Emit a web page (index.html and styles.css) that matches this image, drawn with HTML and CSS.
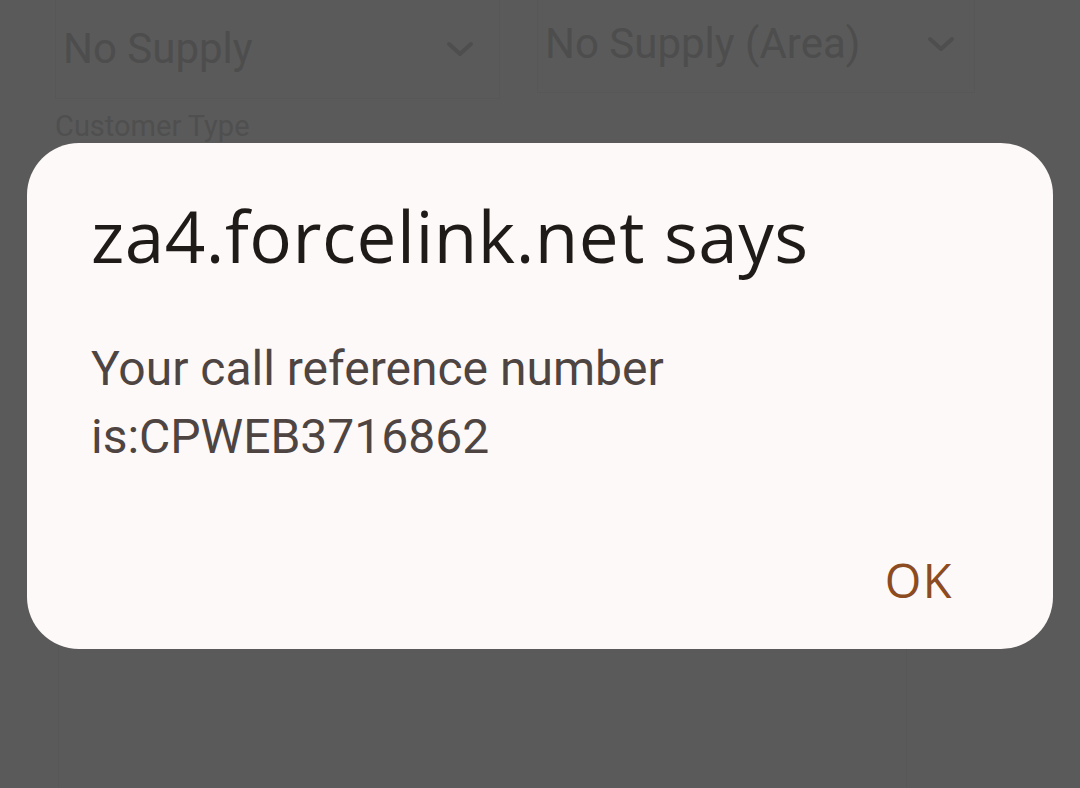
FILE: index.html
```html
<!DOCTYPE html>
<html>
<head>
<meta charset="utf-8">
<link rel="stylesheet" href="styles.css">
</head>
<body>
<div class="page">
  <div class="row">
    <div class="field field-a">
      <span class="field-text">No Supply</span>
      <svg class="chev" width="30" height="18" viewBox="0 0 30 18"><path d="M4 4 L15 14 L26 4" fill="none" stroke="#4e4e4e" stroke-width="4" stroke-linecap="round" stroke-linejoin="round"/></svg>
    </div>
    <div class="field field-b">
      <span class="field-text">No Supply (Area)</span>
      <svg class="chev" width="30" height="18" viewBox="0 0 30 18"><path d="M4 4 L15 14 L26 4" fill="none" stroke="#4e4e4e" stroke-width="4" stroke-linecap="round" stroke-linejoin="round"/></svg>
    </div>
  </div>
  <div class="label">Customer Type</div>
  <div class="textarea"></div>
</div>

<div class="dialog">
  <h1 class="title">za4.forcelink.net says</h1>
  <p class="msg">Your call reference number<br>is:CPWEB3716862</p>
  <div class="actions"><span class="ok">OK</span></div>
</div>
</body>
</html>
```

FILE: styles.css
```css
html, body {
  margin: 0;
  padding: 0;
  width: 1080px;
  height: 788px;
  overflow: hidden;
  background: #5a5a5a;
  font-family: Roboto, "Liberation Sans", sans-serif;
}
.page {
  width: 1080px;
  height: 788px;
  overflow: hidden;
}
.row {
  display: flex;
  gap: 37px;
  padding-left: 55px;
}
.field {
  box-sizing: border-box;
  display: flex;
  align-items: center;
  justify-content: space-between;
  border: 1px solid #575757;
  border-top: none;
}
.field-a {
  width: 445px;
  height: 99px;
  padding: 0 24px 0 7px;
}
.field-b {
  width: 438px;
  height: 93px;
  padding: 0 18px 4px 7px;
}
.field-text {
  font-size: 42px;
  line-height: 50px;
  color: #4d4d4d;
}
.chev {
  display: block;
}
.label {
  margin: 10px 0 0 55px;
  font-size: 29px;
  color: #4f4f4f;
  line-height: 34px;
}
.textarea {
  margin: 30px 0 0 58px;
  width: 849px;
  height: 700px;
  box-sizing: border-box;
  border: 1px solid #575757;
}
.dialog {
  position: absolute;
  left: 27px;
  top: 143px;
  width: 1026px;
  height: 506px;
  box-sizing: border-box;
  background: #fdf9f8;
  border-radius: 52px;
  padding: 55px 64px 0 64px;
  display: flex;
  flex-direction: column;
}
.title {
  margin: 0;
  font-family: "Open Sans", "Noto Sans", sans-serif;
  font-weight: 400;
  font-size: 71px;
  line-height: 76px;
  letter-spacing: 0.5px;
  color: #1f1b19;
}
.msg {
  margin: 61px 0 0 0;
  font-family: Roboto, sans-serif;
  font-size: 48px;
  line-height: 68px;
  color: #4e4542;
}
.actions {
  display: flex;
  justify-content: flex-end;
  margin-top: 79px;
  padding-right: 36px;
}
.ok {
  font-family: "Open Sans", "Noto Sans", sans-serif;
  font-size: 47px;
  font-weight: 500;
  letter-spacing: 1.5px;
  color: #8c4b20;
  line-height: 60px;
}
```
